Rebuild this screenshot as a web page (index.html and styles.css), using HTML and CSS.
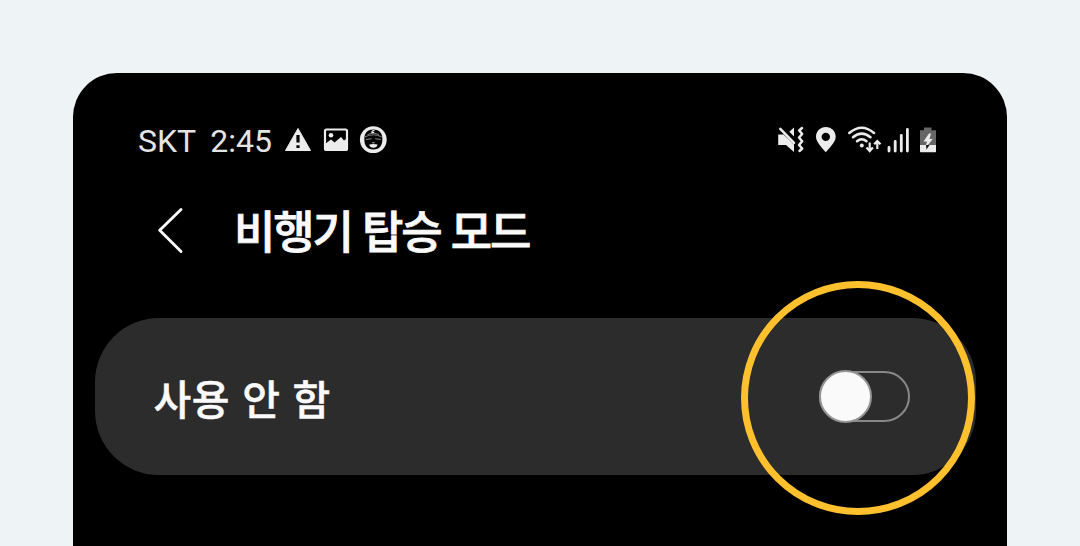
FILE: index.html
```html
<!DOCTYPE html>
<html lang="ko">
<head>
<meta charset="utf-8">
<title>비행기 탑승 모드</title>
<link rel="stylesheet" href="styles.css">
</head>
<body>
<main class="phone">
  <div class="status">
    <span class="carrier">SKT</span>
    <span class="clock">2:45</span>
    <svg class="notices" width="104" height="30" viewBox="284 125 104 30">
      <path d="M298 128.500L310.500 150.500H285.500Z" fill="#ececec" stroke="#ececec" stroke-linejoin="round"/>
      <path d="M298 135v7.500M298 145.200v2.800" stroke="#000" stroke-width="3.200"/>
      <rect x="325" y="129.500" width="22" height="20.500" rx="1.500" fill="none" stroke="#ececec" stroke-width="2.200"/>
      <circle cx="331" cy="135.300" r="2.300" fill="#ececec"/>
      <path d="M325 144L331 139.500L334.500 142.500L341 137L344 140.500L347 138.500V150H325Z" fill="#ececec"/>
      <circle cx="373.300" cy="139.700" r="13.400" fill="#ececec"/>
      <path d="M364.300 139C364.300 132.500 368 129.500 373.300 129.500S382.400 132.500 382.400 139C382.400 145.500 379.500 149.500 373.300 149.500S364.300 145.500 364.300 139Z" fill="#050505"/>
      <path d="M365 136.800Q373.300 132.800 381.700 136.800M367.500 134.500Q373.300 131.600 379 134.500" fill="none" stroke="#999" stroke-width=".8"/>
      <path d="M374.500 130.700Q371.600 130.300 372 132.700H374.200" fill="none" stroke="#ececec" stroke-width="1.300"/>
      <path d="M366 139.500L371.500 138.800M375.200 138.800L380.700 139.500" stroke="#888" stroke-width="1.100"/>
      <path d="M372.200 142.800H374.700" stroke="#bbb" stroke-width="1"/>
      <path d="M369.200 144.500Q373.300 143.700 377.500 144.500Q377 147.800 373.300 147.800Q369.800 147.800 369.200 144.500Z" fill="#ececec"/>
    </svg>
    <svg class="system" width="162" height="34" viewBox="777 123 162 34">
      <path d="M778.200 134.500H783.500L794 144.500V152L786 145H778.200Z" fill="#ececec"/>
      <path d="M780.300 128.800L794 142.800" stroke="#ececec" stroke-width="2.500" stroke-linecap="round"/>
      <path d="M794 127.500V136.500L789.300 131.800Z" fill="#ececec"/>
      <path d="M802 128L799.200 130.500L802.200 134L799 137.500L802.200 141.200L799 145L802.200 148.500L799.500 151" fill="none" stroke="#ececec" stroke-width="2.500" stroke-linecap="round" stroke-linejoin="round"/>
      <path fill-rule="evenodd" d="M825.800 127C831.500 127 835.700 131.300 835.700 136.700C835.700 142.500 829 148 825.800 152.300C822.500 148 816 142.500 816 136.700C816 131.300 820.200 127 825.800 127ZM825.800 132.700A4.200 4.200 0 1 0 825.800 141.100A4.200 4.200 0 1 0 825.800 132.700Z" fill="#ececec"/>
      <g fill="none" stroke="#ececec" stroke-width="2.500" stroke-linecap="round">
        <path d="M849.300 133Q861.700 122.500 874 133"/>
        <path d="M853 137.300Q861.700 130 870.500 137.300"/>
        <path d="M857 141.300Q861.700 137.300 866.500 141.300"/>
      </g>
      <circle cx="861.800" cy="145.600" r="2" fill="#ececec"/>
      <path d="M869.700 142.500V150.500M866.500 147.500L869.700 151L872.900 147.500M877.300 149V141.500M874.200 144.300L877.300 141L880.500 144.300" fill="none" stroke="#ececec" stroke-width="2.200"/>
      <path d="M889 147.500V151M895.200 141.500V151M901.300 135.300V151M907.400 129.500V151" stroke="#ececec" stroke-width="2.800" stroke-linecap="round"/>
      <path d="M920 130.200H924V127.500H931.500V130.200H936V145H920Z" fill="#666"/>
      <path d="M920 145H936V151.500Q936 152.200 935.300 152.200H920.700Q920 152.200 920 151.500Z" fill="#ececec"/>
      <path d="M929 133.500L923.500 141.500H927L926 145H928L932.700 139H929.500L931 133.500Z" fill="#ececec"/>
      <path d="M926 145H929.500L926.500 149.500Z" fill="#111"/>
    </svg>
  </div>
  <header class="header">
    <svg class="back" width="28" height="48" viewBox="156 206 28 48"><path d="M181 209.500L159.700 230.300L181 251.500" fill="none" stroke="#fafafa" stroke-width="2.900" stroke-linecap="round" stroke-linejoin="round"/></svg>
    <h1 class="title">비행기 탑승 모드</h1>
  </header>
  <section class="setting">
    <span class="label">사용 안 함</span>
    <div class="toggle"><span class="thumb"></span><span class="highlight"></span></div>
  </section>
</main>
</body>
</html>
```
FILE: styles.css
```css
body {
  margin: 0;
  height: 546px;
  overflow: hidden;
  background: #eef3f6;
  font-family: Roboto, "Noto Sans CJK KR", sans-serif;
}
.phone {
  box-sizing: border-box;
  width: 934px;
  height: 473px;
  margin: 73px auto 0;
  padding-top: 50px;
  border-radius: 44px 44px 0 0;
  background: #000;
}
.status {
  display: flex;
  height: 36px;
  padding: 0 68px 0 65px;
  color: #e4e4e4;
  font-size: 32px;
  line-height: 37px;
}
.clock { margin-left: 14px; }
.notices { margin: 2px 0 0 12px; }
.system { margin-left: auto; }
.header {
  display: flex;
  align-items: flex-start;
  box-sizing: border-box;
  height: 159px;
  padding: 47px 0 0 83px;
}
.title {
  margin: -9px 0 0 50px;
  color: #fafafa;
  font: 500 45px/66px "Noto Sans CJK KR", sans-serif;
  letter-spacing: -2.200px;
  -webkit-text-stroke: .8px #fafafa;
  white-space: nowrap;
}
.setting {
  display: flex;
  align-items: center;
  justify-content: space-between;
  box-sizing: border-box;
  width: 881px;
  height: 156.500px;
  margin-left: 21.500px;
  padding: 0 65.500px 0 58px;
  border-radius: 64px;
  background: #2c2c2c;
}
.label {
  padding: 1px 0 0 1px;
  color: #fafafa;
  font: 500 41px/60px "Noto Sans CJK KR", sans-serif;
  letter-spacing: .6px;
  -webkit-text-stroke: .5px #fafafa;
}
.toggle {
  position: relative;
  box-sizing: border-box;
  width: 91px;
  height: 51px;
  border: 2px solid #888;
  border-radius: 26px;
}
.thumb {
  position: absolute;
  top: -3px;
  left: -2px;
  box-sizing: border-box;
  width: 53px;
  height: 53px;
  border: 2px solid #949494;
  border-radius: 50%;
  background: #fafafa;
}
.highlight {
  position: absolute;
  top: -92px;
  left: -80.500px;
  box-sizing: border-box;
  width: 234px;
  height: 234px;
  border: 7.500px solid #ffc02d;
  border-radius: 50%;
}
```
